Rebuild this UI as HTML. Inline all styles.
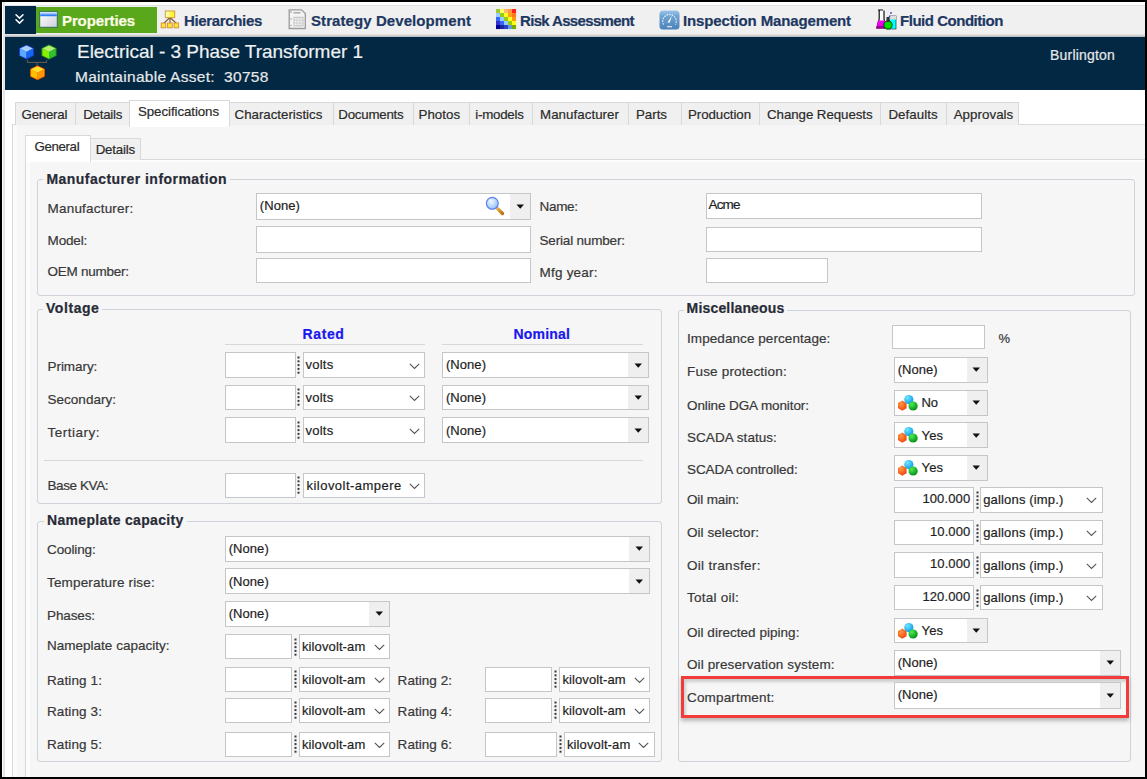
<!DOCTYPE html>
<html><head><meta charset="utf-8"><style>
html,body{margin:0;padding:0;}
body{width:1147px;height:779px;position:relative;overflow:hidden;background:#000;font-family:"Liberation Sans",sans-serif;}
body div, body span, body svg{position:absolute;}
.t{white-space:nowrap;line-height:1;-webkit-text-stroke:0.2px currentColor;}
</style></head><body>
<div style="left:2px;top:2px;width:1143px;height:775px;background:#fff;"></div>
<div style="left:3px;top:2px;width:2px;height:775px;background:#e4e5e9;"></div>
<div style="left:5px;top:5px;width:1140px;height:29px;background:#f0f0f0;"></div>
<div style="left:5px;top:5px;width:1140px;height:1px;background:#dfe0e3;"></div>
<div style="left:5px;top:34px;width:1140px;height:1px;background:#e2e2e2;"></div>
<div style="left:5px;top:35px;width:1140px;height:1px;background:#d2d2d2;"></div>
<div style="left:5px;top:36px;width:1140px;height:1px;background:#b9bec4;"></div>
<div style="left:5px;top:6px;width:31px;height:28px;background:#022843;"></div>
<div style="left:36px;top:7px;width:121px;height:26px;background:#59a81c;"></div>
<div style="left:5px;top:37px;width:1140px;height:53px;background:#022843;"></div>
<span class="t" id="t1" style="left:62.0px;top:12.80px;font-size:15px;color:#fdfbe6;font-weight:bold;letter-spacing:-0.124px;">Properties</span>
<span class="t" id="t2" style="left:184.0px;top:12.80px;font-size:15px;color:#1d3862;font-weight:bold;letter-spacing:-0.348px;">Hierarchies</span>
<span class="t" id="t3" style="left:311.0px;top:12.80px;font-size:15px;color:#1d3862;font-weight:bold;letter-spacing:0.082px;">Strategy Development</span>
<span class="t" id="t4" style="left:520.0px;top:12.80px;font-size:15px;color:#1d3862;font-weight:bold;letter-spacing:-0.659px;">Risk Assessment</span>
<span class="t" id="t5" style="left:683.0px;top:12.80px;font-size:15px;color:#1d3862;font-weight:bold;letter-spacing:-0.138px;">Inspection Management</span>
<span class="t" id="t6" style="left:900.0px;top:12.80px;font-size:15px;color:#1d3862;font-weight:bold;letter-spacing:-0.474px;">Fluid Condition</span>
<span class="t" id="t7" style="left:77.0px;top:42.12px;font-size:19px;color:#eef0f2;letter-spacing:-0.036px;">Electrical - 3 Phase Transformer 1</span>
<span class="t" id="t8" style="left:75.0px;top:68.88px;font-size:15.5px;color:#e6e8ea;letter-spacing:0.289px;">Maintainable Asset:&nbsp; 30758</span>
<span class="t" id="t9" style="left:1050.0px;top:48.15px;font-size:14px;color:#e6e8ea;letter-spacing:0.201px;">Burlington</span>
<div style="left:12px;top:124px;width:1133px;height:653px;background:#f6f6f6;border-left:1px solid #d9d9d9;border-top:1px solid #d9d9d9;box-sizing:border-box;"></div>
<div style="left:13px;top:125px;width:4px;height:652px;background:#fbfbfb;"></div>
<div style="left:15px;top:102px;width:61px;height:23px;background:#f0f0f0;border:1px solid #d9d9d9;border-bottom:none;box-sizing:border-box;"></div>
<span class="t" id="t10" style="left:21.6px;top:107.74px;font-size:13.3px;color:#2b2b2b;letter-spacing:-0.256px;">General</span>
<div style="left:75px;top:102px;width:55px;height:23px;background:#f0f0f0;border:1px solid #d9d9d9;border-bottom:none;box-sizing:border-box;"></div>
<span class="t" id="t11" style="left:83.2px;top:107.74px;font-size:13.3px;color:#2b2b2b;letter-spacing:-0.232px;">Details</span>
<div style="left:229px;top:102px;width:105px;height:23px;background:#f0f0f0;border:1px solid #d9d9d9;border-bottom:none;box-sizing:border-box;"></div>
<span class="t" id="t12" style="left:234.6px;top:107.74px;font-size:13.3px;color:#2b2b2b;letter-spacing:-0.016px;">Characteristics</span>
<div style="left:333px;top:102px;width:81px;height:23px;background:#f0f0f0;border:1px solid #d9d9d9;border-bottom:none;box-sizing:border-box;"></div>
<span class="t" id="t13" style="left:338.3px;top:107.74px;font-size:13.3px;color:#2b2b2b;letter-spacing:-0.237px;">Documents</span>
<div style="left:413px;top:102px;width:57px;height:23px;background:#f0f0f0;border:1px solid #d9d9d9;border-bottom:none;box-sizing:border-box;"></div>
<span class="t" id="t14" style="left:418.5px;top:107.74px;font-size:13.3px;color:#2b2b2b;letter-spacing:0.052px;">Photos</span>
<div style="left:469px;top:102px;width:64px;height:23px;background:#f0f0f0;border:1px solid #d9d9d9;border-bottom:none;box-sizing:border-box;"></div>
<span class="t" id="t15" style="left:475.2px;top:107.74px;font-size:13.3px;color:#2b2b2b;letter-spacing:-0.214px;">i-models</span>
<div style="left:532px;top:102px;width:97px;height:23px;background:#f0f0f0;border:1px solid #d9d9d9;border-bottom:none;box-sizing:border-box;"></div>
<span class="t" id="t16" style="left:540.0px;top:107.74px;font-size:13.3px;color:#2b2b2b;letter-spacing:0.056px;">Manufacturer</span>
<div style="left:628px;top:102px;width:54px;height:23px;background:#f0f0f0;border:1px solid #d9d9d9;border-bottom:none;box-sizing:border-box;"></div>
<span class="t" id="t17" style="left:636.0px;top:107.74px;font-size:13.3px;color:#2b2b2b;letter-spacing:-0.010px;">Parts</span>
<div style="left:681px;top:102px;width:79px;height:23px;background:#f0f0f0;border:1px solid #d9d9d9;border-bottom:none;box-sizing:border-box;"></div>
<span class="t" id="t18" style="left:688.0px;top:107.74px;font-size:13.3px;color:#2b2b2b;letter-spacing:-0.060px;">Production</span>
<div style="left:759px;top:102px;width:122px;height:23px;background:#f0f0f0;border:1px solid #d9d9d9;border-bottom:none;box-sizing:border-box;"></div>
<span class="t" id="t19" style="left:767.0px;top:107.74px;font-size:13.3px;color:#2b2b2b;letter-spacing:-0.058px;">Change Requests</span>
<div style="left:880px;top:102px;width:67px;height:23px;background:#f0f0f0;border:1px solid #d9d9d9;border-bottom:none;box-sizing:border-box;"></div>
<span class="t" id="t20" style="left:888.4px;top:107.74px;font-size:13.3px;color:#2b2b2b;letter-spacing:0.067px;">Defaults</span>
<div style="left:946px;top:102px;width:73px;height:23px;background:#f0f0f0;border:1px solid #d9d9d9;border-bottom:none;box-sizing:border-box;"></div>
<span class="t" id="t21" style="left:953.7px;top:107.74px;font-size:13.3px;color:#2b2b2b;letter-spacing:0.053px;">Approvals</span>
<div style="left:129px;top:100px;width:101px;height:27px;background:#fff;border:1px solid #d9d9d9;border-bottom:none;box-sizing:border-box;"></div>
<span class="t" id="t22" style="left:138.0px;top:105.24px;font-size:13.3px;color:#2b2b2b;letter-spacing:-0.076px;">Specifications</span>
<div style="left:25px;top:159px;width:1120px;height:618px;background:#f6f6f6;border-left:1px solid #d9d9d9;border-top:1px solid #d9d9d9;box-sizing:border-box;"></div>
<div style="left:26px;top:160px;width:4px;height:617px;background:#fcfcfc;"></div>
<div style="left:26px;top:160px;width:1119px;height:2px;background:#fcfcfc;"></div>
<div style="left:90px;top:138px;width:51px;height:22px;background:#f0f0f0;border:1px solid #d9d9d9;border-bottom:none;box-sizing:border-box;"></div>
<span class="t" id="t23" style="left:95.7px;top:142.74px;font-size:13.3px;color:#2b2b2b;letter-spacing:-0.202px;">Details</span>
<div style="left:25px;top:135px;width:66px;height:27px;background:#fff;border:1px solid #d9d9d9;border-bottom:none;box-sizing:border-box;"></div>
<span class="t" id="t24" style="left:34.4px;top:139.74px;font-size:13.3px;color:#2b2b2b;letter-spacing:-0.345px;">General</span>
<div style="left:37px;top:179px;width:1098px;height:117px;background:transparent;border:1px solid #ced3d9;border-radius:3px;box-sizing:border-box;"></div>
<div style="left:43px;top:178px;width:187px;height:3px;background:#f6f6f6;"></div>
<span class="t" id="t25" style="left:46.4px;top:171.65px;font-size:14px;color:#282b36;font-weight:bold;letter-spacing:0.465px;">Manufacturer information</span>
<div style="left:37px;top:309px;width:625px;height:195px;background:transparent;border:1px solid #ced3d9;border-radius:3px;box-sizing:border-box;"></div>
<div style="left:43px;top:308px;width:59px;height:3px;background:#f6f6f6;"></div>
<span class="t" id="t26" style="left:46.0px;top:301.15px;font-size:14px;color:#282b36;font-weight:bold;letter-spacing:0.562px;">Voltage</span>
<div style="left:37px;top:521px;width:625px;height:241px;background:transparent;border:1px solid #ced3d9;border-radius:3px;box-sizing:border-box;"></div>
<div style="left:44px;top:520px;width:143px;height:3px;background:#f6f6f6;"></div>
<span class="t" id="t27" style="left:47.0px;top:513.15px;font-size:14px;color:#282b36;font-weight:bold;letter-spacing:0.331px;">Nameplate capacity</span>
<div style="left:678px;top:310px;width:453px;height:452px;background:transparent;border:1px solid #ced3d9;border-radius:3px;box-sizing:border-box;"></div>
<div style="left:684px;top:309px;width:103px;height:3px;background:#f6f6f6;"></div>
<span class="t" id="t28" style="left:686.6px;top:301.15px;font-size:14px;color:#282b36;font-weight:bold;letter-spacing:0.165px;">Miscellaneous</span>
<span class="t" id="t29" style="left:47.6px;top:201.87px;font-size:13.5px;color:#383838;letter-spacing:0.189px;">Manufacturer:</span>
<span class="t" id="t30" style="left:47.6px;top:234.37px;font-size:13.5px;color:#383838;letter-spacing:-0.181px;">Model:</span>
<span class="t" id="t31" style="left:47.6px;top:265.47px;font-size:13.5px;color:#383838;letter-spacing:-0.274px;">OEM number:</span>
<div style="left:256px;top:193px;width:275px;height:27px;background:#fff;border:1px solid #c5c6c9;box-sizing:border-box;"></div>
<div style="left:510px;top:194px;width:20px;height:25px;background:#efefef;"></div>
<svg width="9" height="6" style="position:absolute;left:515.5px;top:204.0px"><path d="M0.5 0.5 L8 0.5 L4.25 4.8 Z" fill="#111"/></svg>
<span class="t" id="t32" style="left:259.8px;top:199.20px;font-size:13px;color:#1e1e1e;letter-spacing:0.061px;">(None)</span>
<div style="left:256px;top:226px;width:275px;height:27px;background:#fff;border:1px solid #c5c6c9;box-sizing:border-box;"></div>
<div style="left:256px;top:258px;width:275px;height:25px;background:#fff;border:1px solid #c5c6c9;box-sizing:border-box;"></div>
<span class="t" id="t33" style="left:539.5px;top:200.37px;font-size:13.5px;color:#383838;letter-spacing:-0.312px;">Name:</span>
<span class="t" id="t34" style="left:539.5px;top:234.17px;font-size:13.5px;color:#383838;letter-spacing:-0.175px;">Serial number:</span>
<span class="t" id="t35" style="left:539.5px;top:265.57px;font-size:13.5px;color:#383838;letter-spacing:0.221px;">Mfg year:</span>
<div style="left:706px;top:193px;width:276px;height:26px;background:#fff;border:1px solid #c5c6c9;box-sizing:border-box;"></div>
<span class="t" id="t36" style="left:708.5px;top:197.97px;font-size:13.5px;color:#1e1e1e;letter-spacing:-0.815px;">Acme</span>
<div style="left:706px;top:227px;width:276px;height:25px;background:#fff;border:1px solid #c5c6c9;box-sizing:border-box;"></div>
<div style="left:706px;top:258px;width:122px;height:25px;background:#fff;border:1px solid #c5c6c9;box-sizing:border-box;"></div>
<svg width="22" height="22" style="position:absolute;left:483px;top:194px"><defs><radialGradient id="lens" cx="40%" cy="35%" r="70%"><stop offset="0" stop-color="#f4f9ff"/><stop offset="1" stop-color="#8dbdf5"/></radialGradient><linearGradient id="hdl" x1="0" y1="0" x2="1" y2="1"><stop offset="0" stop-color="#f0c060"/><stop offset="1" stop-color="#c07010"/></linearGradient></defs><path d="M13.2 13.2 L19.5 19.5" stroke="url(#hdl)" stroke-width="3.4" stroke-linecap="round"/><circle cx="9.3" cy="9.3" r="5.9" fill="url(#lens)" stroke="#5d7ef0" stroke-width="1.2"/></svg>
<span class="t" id="t37" style="left:302.5px;top:327.15px;font-size:14px;color:#1a18ee;font-weight:bold;letter-spacing:0.616px;">Rated</span>
<span class="t" id="t38" style="left:513.5px;top:327.15px;font-size:14px;color:#1a18ee;font-weight:bold;letter-spacing:0.189px;">Nominal</span>
<div style="left:225px;top:344px;width:200px;height:1px;background:#d4d8dd;"></div>
<div style="left:442px;top:344px;width:201px;height:1px;background:#d4d8dd;"></div>
<span class="t" id="t39" style="left:47.5px;top:359.77px;font-size:13.5px;color:#383838;letter-spacing:-0.058px;">Primary:</span>
<div style="left:225px;top:352px;width:71px;height:26px;background:#fff;border:1px solid #c5c6c9;box-sizing:border-box;"></div>
<svg width="3" height="18" style="position:absolute;left:297.0px;top:356.0px"><rect x="0.5" y="0.5" width="2" height="2" fill="#3a3a3a"/><rect x="0.5" y="4.3" width="2" height="2" fill="#3a3a3a"/><rect x="0.5" y="8.1" width="2" height="2" fill="#3a3a3a"/><rect x="0.5" y="11.9" width="2" height="2" fill="#3a3a3a"/><rect x="0.5" y="15.7" width="2" height="2" fill="#3a3a3a"/></svg>
<div style="left:303px;top:352px;width:122px;height:26px;background:#fff;border:1px solid #c5c6c9;box-sizing:border-box;"></div>
<svg width="11" height="7" style="position:absolute;left:408.5px;top:362.5px"><path d="M0.8 0.8 L5.5 5.5 L10.2 0.8" fill="none" stroke="#555" stroke-width="1.1"/></svg>
<span class="t" id="t40" style="left:305.5px;top:358.20px;font-size:13px;color:#1e1e1e;letter-spacing:0.227px;">volts</span>
<div style="left:442px;top:352px;width:207px;height:26px;background:#fff;border:1px solid #c5c6c9;box-sizing:border-box;"></div>
<div style="left:628px;top:353px;width:20px;height:24px;background:#efefef;"></div>
<svg width="9" height="6" style="position:absolute;left:633.5px;top:362.5px"><path d="M0.5 0.5 L8 0.5 L4.25 4.8 Z" fill="#111"/></svg>
<span class="t" id="t41" style="left:446.0px;top:358.20px;font-size:13px;color:#1e1e1e;letter-spacing:0.044px;">(None)</span>
<span class="t" id="t42" style="left:47.5px;top:393.17px;font-size:13.5px;color:#383838;letter-spacing:0.021px;">Secondary:</span>
<div style="left:225px;top:385px;width:71px;height:25px;background:#fff;border:1px solid #c5c6c9;box-sizing:border-box;"></div>
<svg width="3" height="18" style="position:absolute;left:297.0px;top:388.25px"><rect x="0.5" y="0.5" width="2" height="2" fill="#3a3a3a"/><rect x="0.5" y="4.3" width="2" height="2" fill="#3a3a3a"/><rect x="0.5" y="8.1" width="2" height="2" fill="#3a3a3a"/><rect x="0.5" y="11.9" width="2" height="2" fill="#3a3a3a"/><rect x="0.5" y="15.7" width="2" height="2" fill="#3a3a3a"/></svg>
<div style="left:303px;top:385px;width:122px;height:25px;background:#fff;border:1px solid #c5c6c9;box-sizing:border-box;"></div>
<svg width="11" height="7" style="position:absolute;left:408.5px;top:394.75px"><path d="M0.8 0.8 L5.5 5.5 L10.2 0.8" fill="none" stroke="#555" stroke-width="1.1"/></svg>
<span class="t" id="t43" style="left:305.5px;top:390.70px;font-size:13px;color:#1e1e1e;letter-spacing:0.227px;">volts</span>
<div style="left:442px;top:385px;width:207px;height:25px;background:#fff;border:1px solid #c5c6c9;box-sizing:border-box;"></div>
<div style="left:628px;top:386px;width:20px;height:23px;background:#efefef;"></div>
<svg width="9" height="6" style="position:absolute;left:633.5px;top:394.75px"><path d="M0.5 0.5 L8 0.5 L4.25 4.8 Z" fill="#111"/></svg>
<span class="t" id="t44" style="left:446.0px;top:390.70px;font-size:13px;color:#1e1e1e;letter-spacing:0.044px;">(None)</span>
<span class="t" id="t45" style="left:47.5px;top:425.97px;font-size:13.5px;color:#383838;letter-spacing:0.492px;">Tertiary:</span>
<div style="left:225px;top:417px;width:71px;height:26px;background:#fff;border:1px solid #c5c6c9;box-sizing:border-box;"></div>
<svg width="3" height="18" style="position:absolute;left:297.0px;top:421.15px"><rect x="0.5" y="0.5" width="2" height="2" fill="#3a3a3a"/><rect x="0.5" y="4.3" width="2" height="2" fill="#3a3a3a"/><rect x="0.5" y="8.1" width="2" height="2" fill="#3a3a3a"/><rect x="0.5" y="11.9" width="2" height="2" fill="#3a3a3a"/><rect x="0.5" y="15.7" width="2" height="2" fill="#3a3a3a"/></svg>
<div style="left:303px;top:417px;width:122px;height:26px;background:#fff;border:1px solid #c5c6c9;box-sizing:border-box;"></div>
<svg width="11" height="7" style="position:absolute;left:408.5px;top:427.65px"><path d="M0.8 0.8 L5.5 5.5 L10.2 0.8" fill="none" stroke="#555" stroke-width="1.1"/></svg>
<span class="t" id="t46" style="left:305.5px;top:423.50px;font-size:13px;color:#1e1e1e;letter-spacing:0.227px;">volts</span>
<div style="left:442px;top:417px;width:207px;height:26px;background:#fff;border:1px solid #c5c6c9;box-sizing:border-box;"></div>
<div style="left:628px;top:418px;width:20px;height:24px;background:#efefef;"></div>
<svg width="9" height="6" style="position:absolute;left:633.5px;top:427.65px"><path d="M0.5 0.5 L8 0.5 L4.25 4.8 Z" fill="#111"/></svg>
<span class="t" id="t47" style="left:446.0px;top:423.50px;font-size:13px;color:#1e1e1e;letter-spacing:0.044px;">(None)</span>
<div style="left:44px;top:460px;width:599px;height:1px;background:#d4d8dd;"></div>
<span class="t" id="t48" style="left:47.5px;top:478.67px;font-size:13.5px;color:#383838;letter-spacing:-0.402px;">Base KVA:</span>
<div style="left:225px;top:473px;width:71px;height:25px;background:#fff;border:1px solid #c5c6c9;box-sizing:border-box;"></div>
<svg width="3" height="18" style="position:absolute;left:297.0px;top:476.25px"><rect x="0.5" y="0.5" width="2" height="2" fill="#3a3a3a"/><rect x="0.5" y="4.3" width="2" height="2" fill="#3a3a3a"/><rect x="0.5" y="8.1" width="2" height="2" fill="#3a3a3a"/><rect x="0.5" y="11.9" width="2" height="2" fill="#3a3a3a"/><rect x="0.5" y="15.7" width="2" height="2" fill="#3a3a3a"/></svg>
<div style="left:303px;top:473px;width:122px;height:25px;background:#fff;border:1px solid #c5c6c9;box-sizing:border-box;"></div>
<svg width="11" height="7" style="position:absolute;left:408.5px;top:482.75px"><path d="M0.8 0.8 L5.5 5.5 L10.2 0.8" fill="none" stroke="#555" stroke-width="1.1"/></svg>
<div style="left:304.5px;top:473.5px;width:96px;height:23.5px;overflow:hidden">
<span class="t" id="t49" style="left:2.0px;top:5.20px;font-size:13px;color:#1e1e1e;letter-spacing:0.468px;">kilovolt-amperes</span>
</div>
<span class="t" id="t50" style="left:47.0px;top:543.47px;font-size:13.5px;color:#383838;letter-spacing:-0.121px;">Cooling:</span>
<span class="t" id="t51" style="left:47.0px;top:575.77px;font-size:13.5px;color:#383838;letter-spacing:0.165px;">Temperature rise:</span>
<span class="t" id="t52" style="left:47.0px;top:608.57px;font-size:13.5px;color:#383838;letter-spacing:-0.117px;">Phases:</span>
<span class="t" id="t53" style="left:47.0px;top:639.47px;font-size:13.5px;color:#383838;letter-spacing:0.010px;">Nameplate capacity:</span>
<div style="left:225px;top:536px;width:425px;height:26px;background:#fff;border:1px solid #c5c6c9;box-sizing:border-box;"></div>
<div style="left:629px;top:537px;width:20px;height:24px;background:#efefef;"></div>
<svg width="9" height="6" style="position:absolute;left:634.5px;top:546.25px"><path d="M0.5 0.5 L8 0.5 L4.25 4.8 Z" fill="#111"/></svg>
<span class="t" id="t54" style="left:228.7px;top:542.20px;font-size:13px;color:#1e1e1e;letter-spacing:0.061px;">(None)</span>
<div style="left:225px;top:568px;width:425px;height:26px;background:#fff;border:1px solid #c5c6c9;box-sizing:border-box;"></div>
<div style="left:629px;top:569px;width:20px;height:24px;background:#efefef;"></div>
<svg width="9" height="6" style="position:absolute;left:634.5px;top:578.65px"><path d="M0.5 0.5 L8 0.5 L4.25 4.8 Z" fill="#111"/></svg>
<span class="t" id="t55" style="left:228.7px;top:574.50px;font-size:13px;color:#1e1e1e;letter-spacing:0.061px;">(None)</span>
<div style="left:225px;top:601px;width:165px;height:26px;background:#fff;border:1px solid #c5c6c9;box-sizing:border-box;"></div>
<div style="left:369px;top:602px;width:20px;height:24px;background:#efefef;"></div>
<svg width="9" height="6" style="position:absolute;left:374.5px;top:611.25px"><path d="M0.5 0.5 L8 0.5 L4.25 4.8 Z" fill="#111"/></svg>
<span class="t" id="t56" style="left:228.7px;top:607.20px;font-size:13px;color:#1e1e1e;letter-spacing:0.061px;">(None)</span>
<div style="left:225px;top:634px;width:67px;height:25px;background:#fff;border:1px solid #c5c6c9;box-sizing:border-box;"></div>
<svg width="3" height="18" style="position:absolute;left:294.0px;top:637.55px"><rect x="0.5" y="0.5" width="2" height="2" fill="#3a3a3a"/><rect x="0.5" y="4.3" width="2" height="2" fill="#3a3a3a"/><rect x="0.5" y="8.1" width="2" height="2" fill="#3a3a3a"/><rect x="0.5" y="11.9" width="2" height="2" fill="#3a3a3a"/><rect x="0.5" y="15.7" width="2" height="2" fill="#3a3a3a"/></svg>
<div style="left:299px;top:634px;width:91px;height:25px;background:#fff;border:1px solid #c5c6c9;box-sizing:border-box;"></div>
<svg width="11" height="7" style="position:absolute;left:373.5px;top:644.05px"><path d="M0.8 0.8 L5.5 5.5 L10.2 0.8" fill="none" stroke="#555" stroke-width="1.1"/></svg>
<span class="t" id="t57" style="left:302.0px;top:640.00px;font-size:13px;color:#1e1e1e;letter-spacing:0.110px;">kilovolt-am</span>
<span class="t" id="t58" style="left:47.0px;top:673.67px;font-size:13.5px;color:#383838;letter-spacing:0.110px;">Rating 1:</span>
<div style="left:225px;top:667px;width:67px;height:25px;background:#fff;border:1px solid #c5c6c9;box-sizing:border-box;"></div>
<svg width="3" height="18" style="position:absolute;left:294.0px;top:670.15px"><rect x="0.5" y="0.5" width="2" height="2" fill="#3a3a3a"/><rect x="0.5" y="4.3" width="2" height="2" fill="#3a3a3a"/><rect x="0.5" y="8.1" width="2" height="2" fill="#3a3a3a"/><rect x="0.5" y="11.9" width="2" height="2" fill="#3a3a3a"/><rect x="0.5" y="15.7" width="2" height="2" fill="#3a3a3a"/></svg>
<div style="left:299px;top:667px;width:91px;height:25px;background:#fff;border:1px solid #c5c6c9;box-sizing:border-box;"></div>
<svg width="11" height="7" style="position:absolute;left:373.5px;top:676.65px"><path d="M0.8 0.8 L5.5 5.5 L10.2 0.8" fill="none" stroke="#555" stroke-width="1.1"/></svg>
<span class="t" id="t59" style="left:302.0px;top:672.70px;font-size:13px;color:#1e1e1e;letter-spacing:0.110px;">kilovolt-am</span>
<span class="t" id="t60" style="left:397.6px;top:673.67px;font-size:13.5px;color:#383838;letter-spacing:0.041px;">Rating 2:</span>
<div style="left:485px;top:667px;width:67px;height:25px;background:#fff;border:1px solid #c5c6c9;box-sizing:border-box;"></div>
<svg width="3" height="18" style="position:absolute;left:554.2px;top:670.15px"><rect x="0.5" y="0.5" width="2" height="2" fill="#3a3a3a"/><rect x="0.5" y="4.3" width="2" height="2" fill="#3a3a3a"/><rect x="0.5" y="8.1" width="2" height="2" fill="#3a3a3a"/><rect x="0.5" y="11.9" width="2" height="2" fill="#3a3a3a"/><rect x="0.5" y="15.7" width="2" height="2" fill="#3a3a3a"/></svg>
<div style="left:559px;top:667px;width:91px;height:25px;background:#fff;border:1px solid #c5c6c9;box-sizing:border-box;"></div>
<svg width="11" height="7" style="position:absolute;left:633.5px;top:676.65px"><path d="M0.8 0.8 L5.5 5.5 L10.2 0.8" fill="none" stroke="#555" stroke-width="1.1"/></svg>
<span class="t" id="t61" style="left:562.4px;top:672.70px;font-size:13px;color:#1e1e1e;letter-spacing:0.110px;">kilovolt-am</span>
<span class="t" id="t62" style="left:47.0px;top:704.57px;font-size:13.5px;color:#383838;letter-spacing:0.110px;">Rating 3:</span>
<div style="left:225px;top:698px;width:67px;height:25px;background:#fff;border:1px solid #c5c6c9;box-sizing:border-box;"></div>
<svg width="3" height="18" style="position:absolute;left:294.0px;top:701.15px"><rect x="0.5" y="0.5" width="2" height="2" fill="#3a3a3a"/><rect x="0.5" y="4.3" width="2" height="2" fill="#3a3a3a"/><rect x="0.5" y="8.1" width="2" height="2" fill="#3a3a3a"/><rect x="0.5" y="11.9" width="2" height="2" fill="#3a3a3a"/><rect x="0.5" y="15.7" width="2" height="2" fill="#3a3a3a"/></svg>
<div style="left:299px;top:698px;width:91px;height:25px;background:#fff;border:1px solid #c5c6c9;box-sizing:border-box;"></div>
<svg width="11" height="7" style="position:absolute;left:373.5px;top:707.65px"><path d="M0.8 0.8 L5.5 5.5 L10.2 0.8" fill="none" stroke="#555" stroke-width="1.1"/></svg>
<span class="t" id="t63" style="left:302.0px;top:703.70px;font-size:13px;color:#1e1e1e;letter-spacing:0.110px;">kilovolt-am</span>
<span class="t" id="t64" style="left:397.6px;top:704.57px;font-size:13.5px;color:#383838;letter-spacing:0.041px;">Rating 4:</span>
<div style="left:485px;top:698px;width:67px;height:25px;background:#fff;border:1px solid #c5c6c9;box-sizing:border-box;"></div>
<svg width="3" height="18" style="position:absolute;left:554.2px;top:701.15px"><rect x="0.5" y="0.5" width="2" height="2" fill="#3a3a3a"/><rect x="0.5" y="4.3" width="2" height="2" fill="#3a3a3a"/><rect x="0.5" y="8.1" width="2" height="2" fill="#3a3a3a"/><rect x="0.5" y="11.9" width="2" height="2" fill="#3a3a3a"/><rect x="0.5" y="15.7" width="2" height="2" fill="#3a3a3a"/></svg>
<div style="left:559px;top:698px;width:91px;height:25px;background:#fff;border:1px solid #c5c6c9;box-sizing:border-box;"></div>
<svg width="11" height="7" style="position:absolute;left:633.5px;top:707.65px"><path d="M0.8 0.8 L5.5 5.5 L10.2 0.8" fill="none" stroke="#555" stroke-width="1.1"/></svg>
<span class="t" id="t65" style="left:562.4px;top:703.70px;font-size:13px;color:#1e1e1e;letter-spacing:0.110px;">kilovolt-am</span>
<span class="t" id="t66" style="left:47.0px;top:737.97px;font-size:13.5px;color:#383838;letter-spacing:0.110px;">Rating 5:</span>
<div style="left:225px;top:732px;width:67px;height:25px;background:#fff;border:1px solid #c5c6c9;box-sizing:border-box;"></div>
<svg width="3" height="18" style="position:absolute;left:294.0px;top:735.3px"><rect x="0.5" y="0.5" width="2" height="2" fill="#3a3a3a"/><rect x="0.5" y="4.3" width="2" height="2" fill="#3a3a3a"/><rect x="0.5" y="8.1" width="2" height="2" fill="#3a3a3a"/><rect x="0.5" y="11.9" width="2" height="2" fill="#3a3a3a"/><rect x="0.5" y="15.7" width="2" height="2" fill="#3a3a3a"/></svg>
<div style="left:299px;top:732px;width:91px;height:25px;background:#fff;border:1px solid #c5c6c9;box-sizing:border-box;"></div>
<svg width="11" height="7" style="position:absolute;left:373.5px;top:741.8px"><path d="M0.8 0.8 L5.5 5.5 L10.2 0.8" fill="none" stroke="#555" stroke-width="1.1"/></svg>
<span class="t" id="t67" style="left:302.0px;top:737.80px;font-size:13px;color:#1e1e1e;letter-spacing:0.110px;">kilovolt-am</span>
<span class="t" id="t68" style="left:397.6px;top:737.97px;font-size:13.5px;color:#383838;letter-spacing:0.041px;">Rating 6:</span>
<div style="left:485px;top:732px;width:72px;height:25px;background:#fff;border:1px solid #c5c6c9;box-sizing:border-box;"></div>
<svg width="3" height="18" style="position:absolute;left:559.0px;top:735.3px"><rect x="0.5" y="0.5" width="2" height="2" fill="#3a3a3a"/><rect x="0.5" y="4.3" width="2" height="2" fill="#3a3a3a"/><rect x="0.5" y="8.1" width="2" height="2" fill="#3a3a3a"/><rect x="0.5" y="11.9" width="2" height="2" fill="#3a3a3a"/><rect x="0.5" y="15.7" width="2" height="2" fill="#3a3a3a"/></svg>
<div style="left:564px;top:732px;width:91px;height:25px;background:#fff;border:1px solid #c5c6c9;box-sizing:border-box;"></div>
<svg width="11" height="7" style="position:absolute;left:638.0px;top:741.8px"><path d="M0.8 0.8 L5.5 5.5 L10.2 0.8" fill="none" stroke="#555" stroke-width="1.1"/></svg>
<span class="t" id="t69" style="left:567.0px;top:737.80px;font-size:13px;color:#1e1e1e;letter-spacing:0.110px;">kilovolt-am</span>
<span class="t" id="t70" style="left:687.0px;top:331.97px;font-size:13.5px;color:#383838;letter-spacing:0.074px;">Impedance percentage:</span>
<span class="t" id="t71" style="left:687.0px;top:365.17px;font-size:13.5px;color:#383838;letter-spacing:0.190px;">Fuse protection:</span>
<span class="t" id="t72" style="left:687.0px;top:398.57px;font-size:13.5px;color:#383838;letter-spacing:-0.102px;">Online DGA monitor:</span>
<span class="t" id="t73" style="left:687.0px;top:430.57px;font-size:13.5px;color:#383838;letter-spacing:0.047px;">SCADA status:</span>
<span class="t" id="t74" style="left:687.0px;top:462.97px;font-size:13.5px;color:#383838;letter-spacing:-0.067px;">SCADA controlled:</span>
<span class="t" id="t75" style="left:687.0px;top:493.17px;font-size:13.5px;color:#383838;letter-spacing:-0.145px;">Oil main:</span>
<span class="t" id="t76" style="left:687.0px;top:526.17px;font-size:13.5px;color:#383838;letter-spacing:0.057px;">Oil selector:</span>
<span class="t" id="t77" style="left:687.0px;top:558.57px;font-size:13.5px;color:#383838;letter-spacing:0.301px;">Oil transfer:</span>
<span class="t" id="t78" style="left:687.0px;top:591.07px;font-size:13.5px;color:#383838;letter-spacing:0.255px;">Total oil:</span>
<span class="t" id="t79" style="left:687.0px;top:625.97px;font-size:13.5px;color:#383838;letter-spacing:0.030px;">Oil directed piping:</span>
<span class="t" id="t80" style="left:687.0px;top:658.37px;font-size:13.5px;color:#383838;letter-spacing:0.122px;">Oil preservation system:</span>
<span class="t" id="t81" style="left:687.0px;top:690.87px;font-size:13.5px;color:#383838;letter-spacing:0.160px;">Compartment:</span>
<div style="left:892px;top:325px;width:93px;height:24px;background:#fff;border:1px solid #c5c6c9;box-sizing:border-box;"></div>
<span class="t" id="t82" style="left:998.5px;top:332.40px;font-size:13px;color:#383838;">%</span>
<div style="left:894px;top:357px;width:94px;height:26px;background:#fff;border:1px solid #c5c6c9;box-sizing:border-box;"></div>
<div style="left:967px;top:358px;width:20px;height:24px;background:#efefef;"></div>
<svg width="9" height="6" style="position:absolute;left:972.0px;top:367.3px"><path d="M0.5 0.5 L8 0.5 L4.25 4.8 Z" fill="#111"/></svg>
<span class="t" id="t83" style="left:897.8px;top:363.20px;font-size:13px;color:#1e1e1e;letter-spacing:-0.009px;">(None)</span>
<div style="left:894px;top:390px;width:94px;height:26px;background:#fff;border:1px solid #c5c6c9;box-sizing:border-box;"></div>
<div style="left:967px;top:391px;width:20px;height:24px;background:#efefef;"></div>
<svg width="9" height="6" style="position:absolute;left:972.0px;top:400.20000000000005px"><path d="M0.5 0.5 L8 0.5 L4.25 4.8 Z" fill="#111"/></svg>
<svg width="23" height="20" style="left:896px;top:393px"><defs><radialGradient id="yo1" cx="35%" cy="30%" r="75%"><stop offset="0" stop-color="#ff9a40"/><stop offset="1" stop-color="#f04410"/></radialGradient><radialGradient id="yb1" cx="35%" cy="30%" r="75%"><stop offset="0" stop-color="#70e8ff"/><stop offset="1" stop-color="#0a98e8"/></radialGradient><radialGradient id="yg1" cx="35%" cy="30%" r="75%"><stop offset="0" stop-color="#50ee50"/><stop offset="1" stop-color="#008a18"/></radialGradient></defs><path d="M6.3 7.6 L10.6 10 L10.6 15.3 L6.3 17.8 L2 15.3 L2 10 Z" fill="url(#yo1)"/><circle cx="12.8" cy="6.6" r="4.6" fill="url(#yb1)"/><circle cx="17.1" cy="13" r="4.6" fill="url(#yg1)"/></svg>
<span class="t" id="t84" style="left:921.6px;top:396.00px;font-size:13px;color:#1e1e1e;letter-spacing:-0.132px;">No</span>
<div style="left:894px;top:422px;width:94px;height:26px;background:#fff;border:1px solid #c5c6c9;box-sizing:border-box;"></div>
<div style="left:967px;top:423px;width:20px;height:24px;background:#efefef;"></div>
<svg width="9" height="6" style="position:absolute;left:972.0px;top:432.65px"><path d="M0.5 0.5 L8 0.5 L4.25 4.8 Z" fill="#111"/></svg>
<svg width="23" height="20" style="left:896px;top:425px"><defs><radialGradient id="yo2" cx="35%" cy="30%" r="75%"><stop offset="0" stop-color="#ff9a40"/><stop offset="1" stop-color="#f04410"/></radialGradient><radialGradient id="yb2" cx="35%" cy="30%" r="75%"><stop offset="0" stop-color="#70e8ff"/><stop offset="1" stop-color="#0a98e8"/></radialGradient><radialGradient id="yg2" cx="35%" cy="30%" r="75%"><stop offset="0" stop-color="#50ee50"/><stop offset="1" stop-color="#008a18"/></radialGradient></defs><path d="M6.3 7.6 L10.6 10 L10.6 15.3 L6.3 17.8 L2 15.3 L2 10 Z" fill="url(#yo2)"/><circle cx="12.8" cy="6.6" r="4.6" fill="url(#yb2)"/><circle cx="17.1" cy="13" r="4.6" fill="url(#yg2)"/></svg>
<span class="t" id="t85" style="left:921.6px;top:428.50px;font-size:13px;color:#1e1e1e;letter-spacing:0.067px;">Yes</span>
<div style="left:894px;top:455px;width:94px;height:26px;background:#fff;border:1px solid #c5c6c9;box-sizing:border-box;"></div>
<div style="left:967px;top:456px;width:20px;height:24px;background:#efefef;"></div>
<svg width="9" height="6" style="position:absolute;left:972.0px;top:465.1px"><path d="M0.5 0.5 L8 0.5 L4.25 4.8 Z" fill="#111"/></svg>
<svg width="23" height="20" style="left:896px;top:458px"><defs><radialGradient id="yo3" cx="35%" cy="30%" r="75%"><stop offset="0" stop-color="#ff9a40"/><stop offset="1" stop-color="#f04410"/></radialGradient><radialGradient id="yb3" cx="35%" cy="30%" r="75%"><stop offset="0" stop-color="#70e8ff"/><stop offset="1" stop-color="#0a98e8"/></radialGradient><radialGradient id="yg3" cx="35%" cy="30%" r="75%"><stop offset="0" stop-color="#50ee50"/><stop offset="1" stop-color="#008a18"/></radialGradient></defs><path d="M6.3 7.6 L10.6 10 L10.6 15.3 L6.3 17.8 L2 15.3 L2 10 Z" fill="url(#yo3)"/><circle cx="12.8" cy="6.6" r="4.6" fill="url(#yb3)"/><circle cx="17.1" cy="13" r="4.6" fill="url(#yg3)"/></svg>
<span class="t" id="t86" style="left:921.6px;top:460.90px;font-size:13px;color:#1e1e1e;letter-spacing:0.067px;">Yes</span>
<div style="left:894px;top:487px;width:80px;height:26px;background:#fff;border:1px solid #c5c6c9;box-sizing:border-box;"></div>
<span class="t" id="t87" style="left:922.4px;top:492.00px;font-size:13px;color:#1e1e1e;letter-spacing:0.134px;">100.000</span>
<svg width="3" height="18" style="position:absolute;left:975.5px;top:490.95px"><rect x="0.5" y="0.5" width="2" height="2" fill="#3a3a3a"/><rect x="0.5" y="4.3" width="2" height="2" fill="#3a3a3a"/><rect x="0.5" y="8.1" width="2" height="2" fill="#3a3a3a"/><rect x="0.5" y="11.9" width="2" height="2" fill="#3a3a3a"/><rect x="0.5" y="15.7" width="2" height="2" fill="#3a3a3a"/></svg>
<div style="left:980px;top:487px;width:123px;height:26px;background:#fff;border:1px solid #c5c6c9;box-sizing:border-box;"></div>
<svg width="11" height="7" style="position:absolute;left:1086.0px;top:497.45px"><path d="M0.8 0.8 L5.5 5.5 L10.2 0.8" fill="none" stroke="#555" stroke-width="1.1"/></svg>
<span class="t" id="t88" style="left:983.2px;top:493.20px;font-size:13px;color:#1e1e1e;letter-spacing:0.166px;">gallons (imp.)</span>
<div style="left:894px;top:520px;width:80px;height:25px;background:#fff;border:1px solid #c5c6c9;box-sizing:border-box;"></div>
<span class="t" id="t89" style="left:930.0px;top:525.00px;font-size:13px;color:#1e1e1e;letter-spacing:0.094px;">10.000</span>
<svg width="3" height="18" style="position:absolute;left:975.5px;top:523.65px"><rect x="0.5" y="0.5" width="2" height="2" fill="#3a3a3a"/><rect x="0.5" y="4.3" width="2" height="2" fill="#3a3a3a"/><rect x="0.5" y="8.1" width="2" height="2" fill="#3a3a3a"/><rect x="0.5" y="11.9" width="2" height="2" fill="#3a3a3a"/><rect x="0.5" y="15.7" width="2" height="2" fill="#3a3a3a"/></svg>
<div style="left:980px;top:520px;width:123px;height:25px;background:#fff;border:1px solid #c5c6c9;box-sizing:border-box;"></div>
<svg width="11" height="7" style="position:absolute;left:1086.0px;top:530.15px"><path d="M0.8 0.8 L5.5 5.5 L10.2 0.8" fill="none" stroke="#555" stroke-width="1.1"/></svg>
<span class="t" id="t90" style="left:983.2px;top:526.20px;font-size:13px;color:#1e1e1e;letter-spacing:0.166px;">gallons (imp.)</span>
<div style="left:894px;top:552px;width:80px;height:26px;background:#fff;border:1px solid #c5c6c9;box-sizing:border-box;"></div>
<span class="t" id="t91" style="left:930.0px;top:557.40px;font-size:13px;color:#1e1e1e;letter-spacing:0.094px;">10.000</span>
<svg width="3" height="18" style="position:absolute;left:975.5px;top:556.05px"><rect x="0.5" y="0.5" width="2" height="2" fill="#3a3a3a"/><rect x="0.5" y="4.3" width="2" height="2" fill="#3a3a3a"/><rect x="0.5" y="8.1" width="2" height="2" fill="#3a3a3a"/><rect x="0.5" y="11.9" width="2" height="2" fill="#3a3a3a"/><rect x="0.5" y="15.7" width="2" height="2" fill="#3a3a3a"/></svg>
<div style="left:980px;top:552px;width:123px;height:26px;background:#fff;border:1px solid #c5c6c9;box-sizing:border-box;"></div>
<svg width="11" height="7" style="position:absolute;left:1086.0px;top:562.55px"><path d="M0.8 0.8 L5.5 5.5 L10.2 0.8" fill="none" stroke="#555" stroke-width="1.1"/></svg>
<span class="t" id="t92" style="left:983.2px;top:558.60px;font-size:13px;color:#1e1e1e;letter-spacing:0.166px;">gallons (imp.)</span>
<div style="left:894px;top:585px;width:80px;height:25px;background:#fff;border:1px solid #c5c6c9;box-sizing:border-box;"></div>
<span class="t" id="t93" style="left:922.4px;top:589.80px;font-size:13px;color:#1e1e1e;letter-spacing:0.134px;">120.000</span>
<svg width="3" height="18" style="position:absolute;left:975.5px;top:588.5px"><rect x="0.5" y="0.5" width="2" height="2" fill="#3a3a3a"/><rect x="0.5" y="4.3" width="2" height="2" fill="#3a3a3a"/><rect x="0.5" y="8.1" width="2" height="2" fill="#3a3a3a"/><rect x="0.5" y="11.9" width="2" height="2" fill="#3a3a3a"/><rect x="0.5" y="15.7" width="2" height="2" fill="#3a3a3a"/></svg>
<div style="left:980px;top:585px;width:123px;height:25px;background:#fff;border:1px solid #c5c6c9;box-sizing:border-box;"></div>
<svg width="11" height="7" style="position:absolute;left:1086.0px;top:595.0px"><path d="M0.8 0.8 L5.5 5.5 L10.2 0.8" fill="none" stroke="#555" stroke-width="1.1"/></svg>
<span class="t" id="t94" style="left:983.2px;top:591.00px;font-size:13px;color:#1e1e1e;letter-spacing:0.166px;">gallons (imp.)</span>
<div style="left:894px;top:618px;width:94px;height:25px;background:#fff;border:1px solid #c5c6c9;box-sizing:border-box;"></div>
<div style="left:967px;top:619px;width:20px;height:23px;background:#efefef;"></div>
<svg width="9" height="6" style="position:absolute;left:972.0px;top:627.6500000000001px"><path d="M0.5 0.5 L8 0.5 L4.25 4.8 Z" fill="#111"/></svg>
<svg width="23" height="20" style="left:896px;top:621px"><defs><radialGradient id="yo4" cx="35%" cy="30%" r="75%"><stop offset="0" stop-color="#ff9a40"/><stop offset="1" stop-color="#f04410"/></radialGradient><radialGradient id="yb4" cx="35%" cy="30%" r="75%"><stop offset="0" stop-color="#70e8ff"/><stop offset="1" stop-color="#0a98e8"/></radialGradient><radialGradient id="yg4" cx="35%" cy="30%" r="75%"><stop offset="0" stop-color="#50ee50"/><stop offset="1" stop-color="#008a18"/></radialGradient></defs><path d="M6.3 7.6 L10.6 10 L10.6 15.3 L6.3 17.8 L2 15.3 L2 10 Z" fill="url(#yo4)"/><circle cx="12.8" cy="6.6" r="4.6" fill="url(#yb4)"/><circle cx="17.1" cy="13" r="4.6" fill="url(#yg4)"/></svg>
<span class="t" id="t95" style="left:921.6px;top:623.90px;font-size:13px;color:#1e1e1e;letter-spacing:0.067px;">Yes</span>
<div style="left:894px;top:650px;width:227px;height:26px;background:#fff;border:1px solid #c5c6c9;box-sizing:border-box;"></div>
<div style="left:1100px;top:651px;width:20px;height:24px;background:#efefef;"></div>
<svg width="9" height="6" style="position:absolute;left:1105.5px;top:660.1px"><path d="M0.5 0.5 L8 0.5 L4.25 4.8 Z" fill="#111"/></svg>
<span class="t" id="t96" style="left:897.8px;top:655.90px;font-size:13px;color:#1e1e1e;letter-spacing:-0.009px;">(None)</span>
<div style="left:681px;top:676px;width:448px;height:42px;border:3px solid #f23b3b;box-sizing:border-box;box-shadow:inset 2px 3px 3px rgba(0,0,0,0.16), 0 3px 4px rgba(0,0,0,0.25);"></div>
<div style="left:894px;top:682px;width:227px;height:27px;background:#fff;border:1px solid #c5c6c9;box-sizing:border-box;"></div>
<div style="left:1100px;top:683px;width:20px;height:25px;background:#efefef;"></div>
<svg width="9" height="6" style="position:absolute;left:1105.5px;top:692.85px"><path d="M0.5 0.5 L8 0.5 L4.25 4.8 Z" fill="#111"/></svg>
<span class="t" id="t97" style="left:897.8px;top:688.20px;font-size:13px;color:#1e1e1e;letter-spacing:-0.009px;">(None)</span>
<svg width="12" height="13" style="left:13.5px;top:13px"><path d="M2 1.8 L5.5 5.1 L9 1.8 M2 6.8 L5.5 10.1 L9 6.8" stroke="#fff" stroke-width="1.5" fill="none" stroke-linecap="round"/></svg>
<svg width="19" height="17" style="left:39px;top:11px"><defs><linearGradient id="pw" x1="0" y1="0" x2="1" y2="1"><stop offset="0" stop-color="#ffffff"/><stop offset="1" stop-color="#cfd0dc"/></linearGradient><linearGradient id="pt" x1="0" y1="0" x2="0" y2="1"><stop offset="0" stop-color="#e0f0ff"/><stop offset="1" stop-color="#0c66f0"/></linearGradient></defs><rect x="0.7" y="0.7" width="17.6" height="15.6" fill="url(#pw)" stroke="#2f6e58" stroke-width="1"/><rect x="1.2" y="1.2" width="16.6" height="4" fill="url(#pt)"/></svg>
<svg width="20" height="19" style="left:160px;top:10px"><path d="M10 7.5 L3.5 13.5 M10 7.5 L10 13.5 M10 7.5 L16.5 13.5" stroke="#8a5a3a" stroke-width="1.2" fill="none"/><defs><linearGradient id="hy" x1="0" y1="0" x2="1" y2="0"><stop offset="0" stop-color="#ffffd0"/><stop offset="1" stop-color="#ffee00"/></linearGradient></defs><rect x="5.3" y="1" width="9.4" height="6.6" fill="url(#hy)" stroke="#d0a040" stroke-width="1"/><rect x="1.2" y="13" width="4.6" height="4.8" fill="#ffe23a" stroke="#d09030" stroke-width="0.9"/><rect x="7.6" y="13" width="4.6" height="4.8" fill="#ffe23a" stroke="#d09030" stroke-width="0.9"/><rect x="14" y="13" width="4.6" height="4.8" fill="#ffe23a" stroke="#d09030" stroke-width="0.9"/></svg>
<svg width="19" height="21" style="left:288px;top:9px"><path d="M1.2 0.8 L13.5 0.8 L17.3 4.5 L17.3 19.5 L1.2 19.5 Z" fill="#f4f4f4" stroke="#9a9a9a" stroke-width="1.3"/><rect x="5.5" y="3" width="7" height="1.6" fill="#b0b0b0"/><rect x="6" y="8.3" width="9" height="8.5" fill="none" stroke="#bdbdbd" stroke-width="1"/><path d="M6 11.2 H15 M6 14 H15 M9 8.3 V16.8 M12 8.3 V16.8" stroke="#c8c8c8" stroke-width="0.8"/><circle cx="3" cy="3" r="0.7" fill="#777"/><circle cx="3" cy="10" r="0.7" fill="#999"/><circle cx="3" cy="16.5" r="0.7" fill="#999"/></svg>
<svg width="21" height="21" style="left:496px;top:9px"><rect x="0" y="0" width="4.05" height="4.05" fill="#9acd32"/><rect x="4" y="0" width="4.05" height="4.05" fill="#ffff66"/><rect x="8" y="0" width="4.05" height="4.05" fill="#ffb870"/><rect x="12" y="0" width="4.05" height="4.05" fill="#ff9a40"/><rect x="16" y="0" width="4.05" height="4.05" fill="#ff2222"/><rect x="0" y="4" width="4.05" height="4.05" fill="#99ccff"/><rect x="4" y="4" width="4.05" height="4.05" fill="#99cc11"/><rect x="8" y="4" width="4.05" height="4.05" fill="#ffff22"/><rect x="12" y="4" width="4.05" height="4.05" fill="#ffa020"/><rect x="16" y="4" width="4.05" height="4.05" fill="#ff7a20"/><rect x="0" y="8" width="4.05" height="4.05" fill="#3366ff"/><rect x="4" y="8" width="4.05" height="4.05" fill="#99ccff"/><rect x="8" y="8" width="4.05" height="4.05" fill="#99cc11"/><rect x="12" y="8" width="4.05" height="4.05" fill="#ffff22"/><rect x="16" y="8" width="4.05" height="4.05" fill="#ff9a10"/><rect x="0" y="12" width="4.05" height="4.05" fill="#3333cc"/><rect x="4" y="12" width="4.05" height="4.05" fill="#3366ff"/><rect x="8" y="12" width="4.05" height="4.05" fill="#99ccff"/><rect x="12" y="12" width="4.05" height="4.05" fill="#99cc11"/><rect x="16" y="12" width="4.05" height="4.05" fill="#ffff11"/><rect x="0" y="16" width="4.05" height="4.05" fill="#000099"/><rect x="4" y="16" width="4.05" height="4.05" fill="#222299"/><rect x="8" y="16" width="4.05" height="4.05" fill="#2244cc"/><rect x="12" y="16" width="4.05" height="4.05" fill="#6699dd"/><rect x="16" y="16" width="4.05" height="4.05" fill="#77aa00"/></svg>
<svg width="21" height="21" style="left:658.5px;top:9.5px"><defs><linearGradient id="ig" x1="0" y1="0" x2="0" y2="1"><stop offset="0" stop-color="#9cc6ea"/><stop offset="0.3" stop-color="#6fa3d2"/><stop offset="1" stop-color="#4a83ba"/></linearGradient></defs><rect x="0.5" y="0.5" width="20" height="19" rx="3.5" fill="url(#ig)"/><path d="M4.5 14.5 A6.8 6.8 0 1 1 16.5 14.5" fill="none" stroke="#eef6ff" stroke-width="1.1" stroke-dasharray="1.6 1.1"/><path d="M8.5 12.5 L13 5.5 L10.5 12.8 Z" fill="#fff"/><rect x="8" y="16" width="5" height="1.3" fill="#dde"/></svg>
<svg width="22" height="22" style="left:875.5px;top:8.5px"><path d="M2 1 H7 M3.2 1.5 V10 L0.8 19 H10 L8 10 V1.5" fill="#fff" stroke="#111" stroke-width="1.2"/><path d="M2 11.5 H9 L10.2 19.3 H0.5 Z" fill="#ee00ee"/><path d="M1 17 H10 L10.3 19.5 H0.6Z" fill="#990099"/><rect x="13.5" y="7" width="6.5" height="13" fill="#00ffff" stroke="#335" stroke-width="0.7"/><rect x="13.5" y="7" width="6.5" height="3.5" fill="#ddd"/><circle cx="12" cy="16" r="4.2" fill="#00dd00" stroke="#003300" stroke-width="0.9"/><rect x="10.5" y="8" width="3" height="5" fill="#333"/><circle cx="15" cy="4" r="0.9" fill="#44c"/><circle cx="13.5" cy="7.5" r="0.8" fill="#44c"/></svg>
<svg width="50" height="48" style="left:10px;top:38px"><path d="M17.4 22 V24.4 H36.7 V22 M27 24.4 V27.5" stroke="#6d5e50" stroke-width="1" fill="none"/><path d="M16.5 6.5 L24 10.25 L24 17.75 L16.5 21.5 L9 17.75 L9 10.25 Z" fill="#1a3cc8"/><path d="M16.5 7.5 L23 10.55 L16.5 14.0 L10 10.55 Z" fill="#a8d0ff"/><path d="M10 10.55 L16.5 14.0 L16.5 20.5 L10 17.45 Z" fill="#5aa8ff"/><path d="M23 10.55 L16.5 14.0 L16.5 20.5 L23 17.45 Z" fill="#1565f0"/><path d="M39.0 6.5 L46.5 10.25 L46.5 17.75 L39.0 21.5 L31.5 17.75 L31.5 10.25 Z" fill="#2a9a20"/><path d="M39.0 7.5 L45.5 10.55 L39.0 14.0 L32.5 10.55 Z" fill="#b6f070"/><path d="M32.5 10.55 L39.0 14.0 L39.0 20.5 L32.5 17.45 Z" fill="#88f000"/><path d="M45.5 10.55 L39.0 14.0 L39.0 20.5 L45.5 17.45 Z" fill="#30c030"/><path d="M27.5 27.3 L35 31.05 L35 38.55 L27.5 42.3 L20 38.55 L20 31.05 Z" fill="#e85000"/><path d="M27.5 28.3 L34 31.35 L27.5 34.8 L21 31.35 Z" fill="#ffe030"/><path d="M21 31.35 L27.5 34.8 L27.5 41.3 L21 38.25 Z" fill="#ffc000"/><path d="M34 31.35 L27.5 34.8 L27.5 41.3 L34 38.25 Z" fill="#ff9800"/></svg>
</body></html>
